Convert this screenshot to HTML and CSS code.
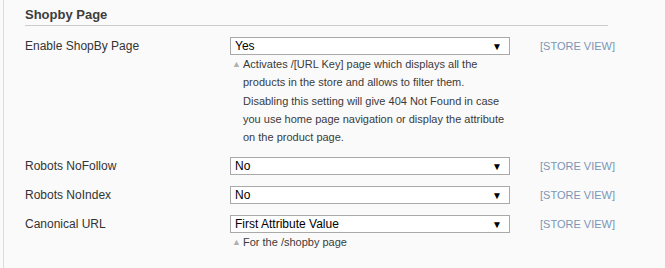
FILE: index.html
```html
<html>

<head>
    <title>Shopby Page</title>
    <link rel="stylesheet" href="styles.css">
</head>

<body>
    <div class="section">
        <h3 class="section-title">Shopby Page</h3>

        <div class="row">
            <label class="label">Enable ShopBy Page</label>
            <div class="value">
                <div class="select"><span>Yes</span><span class="arrow">&#9660;</span></div>
                <p class="note">
                    <span class="note-mark">&#9650;</span>
                    <span>Activates /[URL Key] page which displays all the products in the store and allows to filter them. Disabling this setting will give 404 Not Found in case you use home page navigation or display the attribute on the product page.</span>
                </p>
            </div>
            <span class="scope">[STORE VIEW]</span>
        </div>

        <div class="row">
            <label class="label">Robots NoFollow</label>
            <div class="value">
                <div class="select"><span>No</span><span class="arrow">&#9660;</span></div>
            </div>
            <span class="scope">[STORE VIEW]</span>
        </div>

        <div class="row">
            <label class="label">Robots NoIndex</label>
            <div class="value">
                <div class="select"><span>No</span><span class="arrow">&#9660;</span></div>
            </div>
            <span class="scope">[STORE VIEW]</span>
        </div>

        <div class="row">
            <label class="label">Canonical URL</label>
            <div class="value">
                <div class="select"><span>First Attribute Value</span><span class="arrow">&#9660;</span></div>
                <p class="note">
                    <span class="note-mark">&#9650;</span>
                    <span>For the /shopby page</span>
                </p>
            </div>
            <span class="scope">[STORE VIEW]</span>
        </div>
    </div>
</body>

</html>
```

FILE: styles.css
```css
body {
    margin: 0;
    background-color: #fafafa;
    font-family: "Liberation Sans", Arial, sans-serif;
    font-size: 12px;
    color: #333;
}

.section {
    margin-left: 3px;
    border-left: 1px solid #dcdcdc;
    padding-left: 21px;
    height: 268px;
    box-sizing: border-box;
}

.section-title {
    margin: 0 0 11px 0;
    padding: 7px 0 2px 0;
    width: 583px;
    font-size: 13px;
    line-height: 16px;
    color: #3d3d3d;
    border-bottom: 1px solid #cccccc;
}

.row {
    display: flex;
    align-items: flex-start;
    margin-bottom: 11px;
}

.label {
    width: 205px;
    line-height: 18px;
    color: #333;
}

.value {
    width: 280px;
}

.select {
    display: flex;
    justify-content: space-between;
    align-items: center;
    height: 18px;
    box-sizing: border-box;
    border: 1px solid #a9a9a9;
    background-color: #fff;
    padding: 0 7px 0 4px;
    color: #000;
    font-size: 12px;
}

.arrow {
    font-size: 10px;
    color: #000;
}

.note {
    display: flex;
    margin: 0;
    font-size: 11px;
    line-height: 18.3px;
    color: #3a3a3a;
}

.note-mark {
    flex: none;
    width: 13px;
    padding-left: 2px;
    box-sizing: border-box;
    font-size: 9px;
    color: #b0b0b0;
}

.scope {
    margin-left: 30px;
    line-height: 18px;
    font-size: 11px;
    color: #7b96b6;
}
```
